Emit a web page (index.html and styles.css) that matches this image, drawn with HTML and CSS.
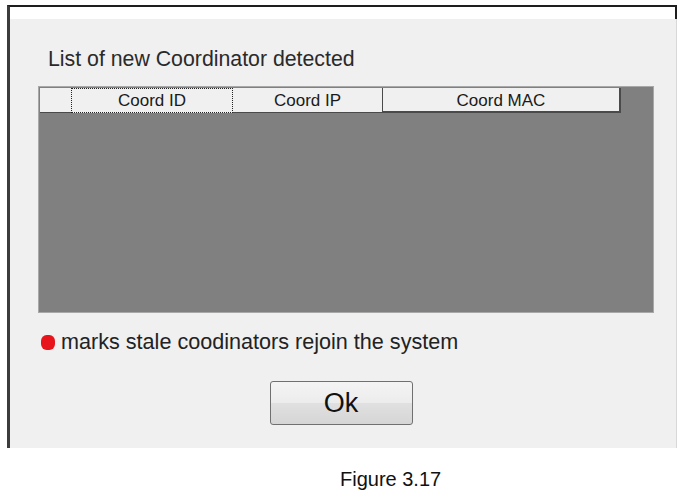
FILE: index.html
```html
<!DOCTYPE html>
<html>

<head>
  <title>New Coordinator</title>
  <link rel="stylesheet" href="styles.css">
</head>

<body>
  <!-- Dialog window -->
  <div class="dialog">
    <div class="dialog-top"></div>
    <div class="dialog-body">
      <p class="caption">List of new Coordinator detected</p>

      <!-- Coordinator grid -->
      <div class="grid">
        <div class="grid-head">
          <div class="head-cell blank"></div>
          <div class="head-cell focused col-id">Coord ID</div>
          <div class="head-cell col-ip">Coord IP</div>
          <div class="head-cell col-mac">Coord MAC</div>
        </div>
      </div>

      <div class="legend">
        <span class="dot"></span>
        <span>marks stale coodinators rejoin the system</span>
      </div>

      <div class="actions">
        <button class="ok-button">Ok</button>
      </div>
    </div>
  </div>

  <p class="figure">Figure 3.17</p>
</body>

</html>
```

FILE: styles.css
```css
body {
  font-family: "Liberation Sans", Arial, sans-serif;
  margin: 0;
  padding: 0;
  background-color: #fff;
  color: #222;
}

.dialog {
  margin: 5px 0 0 7px;
  width: 667px;
  border-top: 2px solid #1e1e1e;
  border-left: 3px solid #3c3c3c;
}

.dialog-top {
  height: 12px;
  background-color: #fff;
  border-right: 2px solid #1e1e1e;
}

.dialog-body {
  height: 429px;
  background-color: #f0f0f0;
  border-right: 1px solid #d8d8d8;
  overflow: hidden;
}

.caption {
  margin: 28px 0 0 38px;
  font-size: 21.3px;
  line-height: 24px;
  color: #2a2a2a;
}

.grid {
  box-sizing: border-box;
  margin: 15px 0 0 28px;
  width: 616px;
  height: 227px;
  border: 1px solid #a8a8a8;
  background-color: #808080;
}

.grid-head {
  display: flex;
  margin: 1px 0 0 1px;
  height: 25px;
}

.head-cell {
  box-sizing: border-box;
  height: 25px;
  background-color: #f0f0f0;
  border-right: 1px solid #4a4a4a;
  border-bottom: 1px solid #4a4a4a;
  font-size: 17px;
  line-height: 26px;
  text-align: center;
  color: #1a1a1a;
}

.head-cell.blank {
  width: 31px;
  border-right: none;
}

.head-cell.focused {
  border: 1px dotted #222;
  line-height: 24px;
}

.col-id {
  width: 162px;
}

.col-ip {
  width: 150px;
}

.col-mac {
  width: 238px;
  border-right-width: 2px;
  border-bottom-width: 2px;
}

.legend {
  display: flex;
  align-items: center;
  gap: 6px;
  margin: 17px 0 0 31px;
  font-size: 21.6px;
  line-height: 24px;
}

.dot {
  width: 14px;
  height: 15px;
  border-radius: 40%;
  background-color: #e8141c;
}

.actions {
  display: flex;
  justify-content: center;
  margin-top: 27px;
  padding-right: 4px;
}

.ok-button {
  width: 143px;
  height: 44px;
  border: 1px solid #707070;
  border-radius: 3px;
  background: linear-gradient(#f4f4f4, #ececec 50%, #e0e0e0 51%, #d6d6d6);
  font-family: "Liberation Sans", Arial, sans-serif;
  font-size: 27px;
  color: #111;
  cursor: pointer;
}

.figure {
  margin: 20px 0 0 340px;
  font-size: 20px;
  line-height: 23px;
  color: #111;
}
```
